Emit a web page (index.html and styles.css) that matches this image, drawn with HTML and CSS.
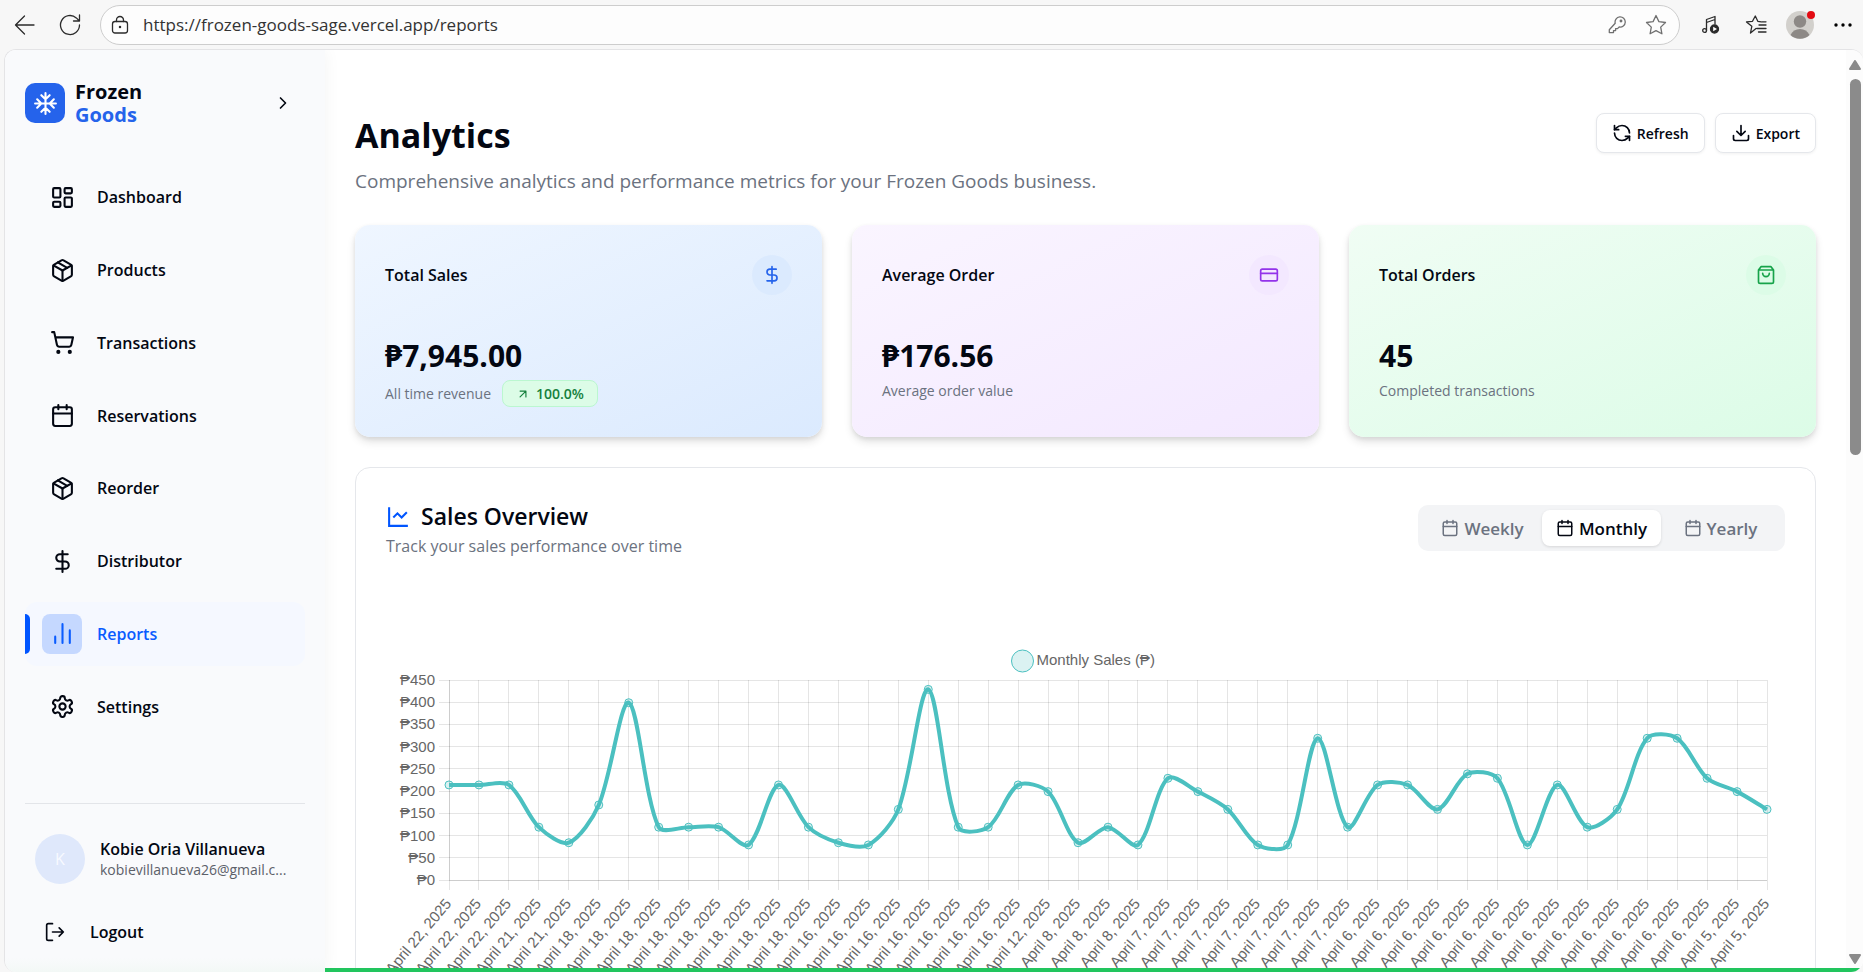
FILE: index.html
```html
<!DOCTYPE html>
<html lang="en">
<head>
<meta charset="utf-8">
<title>Analytics - Frozen Goods</title>
<link rel="stylesheet" href="styles.css">
</head>
<body>
<svg class="sprite" aria-hidden="true">
  <symbol id="box" viewBox="0 0 24 24"><path d="M11 21.73a2 2 0 0 0 2 0l7-4A2 2 0 0 0 21 16V8a2 2 0 0 0-1-1.73l-7-4a2 2 0 0 0-2 0l-7 4A2 2 0 0 0 3 8v8a2 2 0 0 0 1 1.73z"/><path d="M12 22V12"/><path d="M3.300 7l8.700 5 8.700-5"/><path d="m7.500 4.270 9 5.150"/></symbol>
  <symbol id="calendar" viewBox="0 0 24 24"><path d="M8 2v4M16 2v4"/><rect width="18" height="18" x="3" y="4" rx="2"/><path d="M3 10h18"/></symbol>
  <symbol id="dollar" viewBox="0 0 24 24"><path d="M12 2v20M17 5H9.500a3.500 3.500 0 0 0 0 7h5a3.500 3.500 0 0 1 0 7H6"/></symbol>
  <symbol id="star" viewBox="0 0 24 24"><path d="M12 2.500l2.900 6.100 6.600.9-4.800 4.600 1.200 6.700-5.900-3.200-5.900 3.200 1.200-6.700-4.800-4.600 6.600-.9z"/></symbol>
</svg>

<header class="toolbar">
  <button class="tool" aria-label="Back"><svg class="thin" width="22" height="22" viewBox="0 0 22 22"><path d="M20 11H1.500M10.500 2l-9 9 9 9"/></svg></button>
  <button class="tool" aria-label="Reload"><svg class="thin" width="22" height="22" viewBox="0 0 22 22"><path d="M20.500 11a9.500 9.500 0 1 1-3.200-7.100L20 6.500M20.500 1v6h-6"/></svg></button>
  <div class="address">
    <svg class="thin" width="18" height="20" viewBox="0 0 18 20"><rect x="1.500" y="6.500" width="15" height="11.500" rx="2.500"/><path d="M5.500 6.500V5a3.500 3.500 0 0 1 7 0v1.500"/><circle class="solid" cx="9" cy="12" r=".6"/></svg>
    <input class="url" type="text" aria-label="Address" value="https://frozen-goods-sage.vercel.app/reports">
    <svg class="thin grey" width="18" height="18" viewBox="0 0 18 18"><path d="M7.200 7.200a5.100 5.100 0 1 1 4 3.800L9.500 12.600H7.600v2H5.500v2H1.300v-2.900z"/><circle cx="13" cy="5" r=".8"/></svg>
    <svg class="thin grey" width="24" height="24"><use href="#star"/></svg>
  </div>
  <div class="tools">
    <button class="tool" aria-label="Media controls"><svg class="thin" width="20" height="20" viewBox="0 0 20 20"><path d="M5.500 15.500V4.500l8.500-3V9M5.500 7.500l8.500-3"/><circle cx="3.600" cy="15.500" r="1.900"/><circle class="solid" cx="13.500" cy="14" r="4"/><path class="play" d="M12.200 11.700v4.600l3.800-2.300z"/></svg></button>
    <button class="tool" aria-label="Favorites"><svg class="thin" width="22" height="22" viewBox="0 0 22 22"><path d="M11 14.500l-5.500 4.500 1.300-6.700L1.500 7.900l6-.6L10.300 2l2.500 5.300 3.400.5M14 11h7M12 14.500h9M13.500 18H21M17 7.800h4"/></svg></button>
    <button class="tool" aria-label="Profile"><svg width="34" height="34" viewBox="0 0 34 34"><circle cx="16" cy="17" r="14" fill="#d2d0cc"/><path d="M6.500 27a10.500 10.500 0 0 1 19 0 14 14 0 0 1-19 0z" fill="#8d8986"/><circle cx="16" cy="13.500" r="6.200" fill="#8d8986"/><circle cx="27" cy="7" r="4" fill="#e30b13"/></svg></button>
    <button class="tool more" aria-label="More"><svg width="18" height="4" viewBox="0 0 18 4"><circle cx="2" cy="2" r="1.700"/><circle cx="9" cy="2" r="1.700"/><circle cx="16" cy="2" r="1.700"/></svg></button>
  </div>
</header>

<div class="app">
  <aside class="sidebar">
    <div class="brand">
      <span class="logo"><svg class="icon" width="25" height="25" viewBox="0 0 24 24"><path d="M2 12h20M12 2v20M20 16l-4-4 4-4M4 8l4 4-4 4M16 4l-4 4-4-4M8 20l4-4 4 4"/></svg></span>
      <span class="brand-name">Frozen<br><span class="brand-blue">Goods</span></span>
      <button class="collapse" aria-label="Toggle sidebar"><svg class="icon" width="20" height="20" viewBox="0 0 24 24"><path d="m9 18 6-6-6-6"/></svg></button>
    </div>
    <nav class="nav">
      <a class="nav-item" href="#"><span class="nav-icon"><svg class="icon" width="25" height="25" viewBox="0 0 24 24"><rect width="7" height="9" x="3" y="3" rx="1"/><rect width="7" height="5" x="14" y="3" rx="1"/><rect width="7" height="9" x="14" y="12" rx="1"/><rect width="7" height="5" x="3" y="16" rx="1"/></svg></span>Dashboard</a>
      <a class="nav-item" href="#"><span class="nav-icon"><svg class="icon" width="25" height="25"><use href="#box"/></svg></span>Products</a>
      <a class="nav-item" href="#"><span class="nav-icon"><svg class="icon" width="25" height="25" viewBox="0 0 24 24"><circle cx="8" cy="21" r="1"/><circle cx="19" cy="21" r="1"/><path d="M2.050 2.050h2l2.660 12.420a2 2 0 0 0 2 1.580h9.780a2 2 0 0 0 1.950-1.570l1.650-7.430H5.120"/></svg></span>Transactions</a>
      <a class="nav-item" href="#"><span class="nav-icon"><svg class="icon" width="25" height="25"><use href="#calendar"/></svg></span>Reservations</a>
      <a class="nav-item" href="#"><span class="nav-icon"><svg class="icon" width="25" height="25"><use href="#box"/></svg></span>Reorder</a>
      <a class="nav-item" href="#"><span class="nav-icon"><svg class="icon" width="25" height="25"><use href="#dollar"/></svg></span>Distributor</a>
      <a class="nav-item active" href="#" aria-current="page"><span class="nav-icon"><svg class="icon" width="25" height="25" viewBox="0 0 24 24"><path d="M5 21v-6M12 21V3M19 21V9"/></svg></span>Reports</a>
      <a class="nav-item" href="#"><span class="nav-icon"><svg class="icon" width="25" height="25" viewBox="0 0 24 24"><path d="M12.220 2h-.44a2 2 0 0 0-2 2v.18a2 2 0 0 1-1 1.730l-.43.25a2 2 0 0 1-2 0l-.15-.08a2 2 0 0 0-2.730.73l-.22.38a2 2 0 0 0 .73 2.730l.15.1a2 2 0 0 1 1 1.720v.51a2 2 0 0 1-1 1.740l-.15.09a2 2 0 0 0-.73 2.730l.22.38a2 2 0 0 0 2.730.73l.15-.08a2 2 0 0 1 2 0l.43.25a2 2 0 0 1 1 1.730V20a2 2 0 0 0 2 2h.44a2 2 0 0 0 2-2v-.18a2 2 0 0 1 1-1.730l.43-.25a2 2 0 0 1 2 0l.15.08a2 2 0 0 0 2.730-.73l.22-.39a2 2 0 0 0-.73-2.730l-.15-.08a2 2 0 0 1-1-1.740v-.5a2 2 0 0 1 1-1.740l.15-.09a2 2 0 0 0 .73-2.730l-.22-.38a2 2 0 0 0-2.730-.73l-.15.08a2 2 0 0 1-2 0l-.43-.25a2 2 0 0 1-1-1.730V4a2 2 0 0 0-2-2z"/><circle cx="12" cy="12" r="3"/></svg></span>Settings</a>
    </nav>
    <div class="account">
      <div class="user">
        <span class="avatar">K</span>
        <div class="user-text"><div class="user-name">Kobie Oria Villanueva</div><div class="user-mail">kobievillanueva26@gmail.c...</div></div>
      </div>
      <button class="logout"><svg class="icon" width="20" height="20" viewBox="0 0 24 24"><path d="M9 22H4a2 2 0 0 1-2-2V4a2 2 0 0 1 2-2h5M17 17l5-5-5-5M22 12H9"/></svg>Logout</button>
    </div>
  </aside>

  <main class="main">
    <div class="page-head">
      <div>
        <h1 class="title">Analytics</h1>
        <p class="subtitle">Comprehensive analytics and performance metrics for your Frozen Goods business.</p>
      </div>
      <div class="actions">
        <button class="btn"><svg class="icon" width="20" height="20" viewBox="0 0 24 24"><path d="M21 12a9 9 0 0 0-9-9 9.750 9.750 0 0 0-6.740 2.740L3 8"/><path d="M3 3v5h5M3 12a9 9 0 0 0 9 9 9.750 9.750 0 0 0 6.740-2.740L21 16"/><path d="M16 16h5v5"/></svg>Refresh</button>
        <button class="btn"><svg class="icon" width="20" height="20" viewBox="0 0 24 24"><path d="M21 15v4a2 2 0 0 1-2 2H5a2 2 0 0 1-2-2v-4M7 10l5 5 5-5M12 15V3"/></svg>Export</button>
      </div>
    </div>

    <section class="stats">
      <article class="stat blue">
        <div class="stat-head"><h2 class="stat-title">Total Sales</h2><span class="stat-icon"><svg class="icon" width="20" height="20"><use href="#dollar"/></svg></span></div>
        <div class="stat-value">₱7,945.00</div>
        <div class="stat-note">All time revenue <span class="badge"><svg class="icon" width="14" height="14" viewBox="0 0 24 24"><path d="M7 7h10v10M7 17 17 7"/></svg>100.0%</span></div>
      </article>
      <article class="stat purple">
        <div class="stat-head"><h2 class="stat-title">Average Order</h2><span class="stat-icon"><svg class="icon" width="20" height="20" viewBox="0 0 24 24"><rect width="20" height="14" x="2" y="5" rx="2"/><path d="M2 10h20"/></svg></span></div>
        <div class="stat-value">₱176.56</div>
        <div class="stat-note">Average order value</div>
      </article>
      <article class="stat green">
        <div class="stat-head"><h2 class="stat-title">Total Orders</h2><span class="stat-icon"><svg class="icon" width="20" height="20" viewBox="0 0 24 24"><path d="M6 2 3 6v14a2 2 0 0 0 2 2h14a2 2 0 0 0 2-2V6l-3-4zM3 6h18M16 10a4 4 0 0 1-8 0"/></svg></span></div>
        <div class="stat-value">45</div>
        <div class="stat-note">Completed transactions</div>
      </article>
    </section>

    <section class="panel">
      <div class="panel-head">
        <div>
          <h2 class="panel-title"><svg class="icon" width="25" height="25" viewBox="0 0 24 24"><path class="square" d="M3 3v18h18M7 13l4-4 4 4 5-5"/></svg>Sales Overview</h2>
          <p class="panel-sub">Track your sales performance over time</p>
        </div>
        <div class="tabs" role="tablist">
          <button class="tab" role="tab"><svg class="icon" width="18" height="18"><use href="#calendar"/></svg>Weekly</button>
          <button class="tab selected" role="tab" aria-selected="true"><svg class="icon" width="18" height="18"><use href="#calendar"/></svg>Monthly</button>
          <button class="tab" role="tab"><svg class="icon" width="18" height="18"><use href="#calendar"/></svg>Yearly</button>
        </div>
      </div>
      <svg class="chart" id="chart" role="img" aria-label="Monthly Sales"></svg>
    </section>
  </main>

  <div class="scrollbar" aria-hidden="true">
    <svg width="12" height="10" viewBox="0 0 12 10"><path d="M6 1l5 8H1z"/></svg>
    <span class="thumb"></span>
    <svg width="12" height="10" viewBox="0 0 12 10"><path d="M6 9l5-8H1z"/></svg>
  </div>
  <div class="progress"></div>
</div>
<script src="chart.js"></script>
</body>
</html>
```
FILE: styles.css
```css
* { box-sizing: border-box; }
body {
  margin: 0;
  height: 100vh;
  overflow: hidden;
  display: flex;
  flex-direction: column;
  background: #f7f7f7;
  color: #030712;
  font-family: "Open Sans", "Noto Sans", sans-serif;
  font-size: 16px;
}
h1, h2, p { margin: 0; }
button, input { font: inherit; color: inherit; border: 0; background: none; padding: 0; }
a { color: inherit; text-decoration: none; }
svg { display: block; flex: none; }
.sprite { position: absolute; width: 0; height: 0; }
.icon { fill: none; stroke: currentColor; stroke-width: 2; stroke-linecap: round; stroke-linejoin: round; }

/* browser toolbar */
.toolbar { display: flex; align-items: center; height: 49px; flex: none; padding-left: 2px; color: #2b2b2b; }
.thin { fill: none; stroke: currentColor; stroke-width: 1.3; stroke-linejoin: round; stroke-linecap: round; }
.grey { color: #707070; }
.solid { fill: currentColor; }
.play { fill: #fff; stroke: none; }
.tool { width: 45px; height: 40px; display: flex; align-items: center; justify-content: center; }
.tool.more { width: 40px; }
.tools { display: flex; }
.address {
  flex: 1; min-width: 0; height: 40px; margin: 0 8px; padding: 0 11px 0 10px;
  display: flex; align-items: center; gap: 18px;
  background: #fdfdfd; border: 1px solid #cdcdcd; border-radius: 20px;
}
.url { flex: 1; min-width: 0; outline: 0; font-size: 17px; color: #333; margin-left: -4px; }

/* app frame */
.app {
  flex: 1; min-height: 0; margin-left: 4px; display: flex; position: relative; overflow: hidden;
  background: #fff; border: 1px solid #e4e4e6; border-right: 0; border-bottom: 0; border-radius: 12px;
}
.sidebar {
  width: 320px; flex: none; display: flex; flex-direction: column;
  padding: 32px 20px 28px; background: linear-gradient(#f9fafc calc(100% - 14px), #f3f8f6);
  box-shadow: 0 0 16px rgba(0, 0, 0, .05);
}
.brand { display: flex; align-items: center; height: 42px; gap: 10px; }
.logo { width: 40px; height: 40px; border-radius: 10px; background: #2563eb; color: #fff; display: flex; align-items: center; justify-content: center; }
.brand-name { font-size: 20px; line-height: 23px; font-weight: 700; }
.brand-blue { color: #2563eb; }
.collapse { margin-left: auto; margin-right: 12px; }
.nav { flex: 1; display: flex; flex-direction: column; gap: 8px; margin: 41px 0 64px; }
.nav-item { flex: 1; display: flex; align-items: center; gap: 15px; padding-left: 17px; border-radius: 12px; font-weight: 600; position: relative; }
.nav-icon { width: 40px; height: 40px; border-radius: 8px; display: flex; align-items: center; justify-content: center; }
.active { background: #f5f8ff; color: #0a5cff; }
.active .nav-icon { background: #c5d8ff; }
.active::before { content: ""; position: absolute; left: 0; width: 5px; height: 40px; background: #0055ff; border-radius: 0 5px 5px 0; }
.account { border-top: 1px solid #e3e5e9; padding: 30px 10px 0; }
.user { display: flex; align-items: center; gap: 15px; height: 50px; }
.avatar { width: 50px; height: 50px; flex: none; border-radius: 50%; background: #dfe8fb; color: #f8faff; display: flex; align-items: center; justify-content: center; font-weight: 500; }
.user-name { line-height: 22px; font-weight: 600; }
.user-mail { font-size: 14px; line-height: 20px; color: #5c6069; }
.user-text { white-space: nowrap; }
.logout { display: flex; align-items: center; gap: 25px; margin: 36px 0 0 10px; line-height: 24px; font-weight: 600; }

/* page */
.main { flex: 1; min-width: 0; padding: 60px 30px 0; overflow: hidden; }
.page-head { display: flex; justify-content: space-between; align-items: flex-start; }
.title { font-size: 34px; line-height: 50px; font-weight: 700; }
.subtitle { font-size: 19px; line-height: 30px; margin-top: 6px; color: #6b7280; }
.actions { display: flex; gap: 10px; margin-top: 3px; }
.btn { display: flex; align-items: center; gap: 5px; height: 40px; padding: 0 15px; border: 1px solid #e5e7eb; border-radius: 8px; background: #fff; font-size: 14px; font-weight: 600; box-shadow: 0 1px 3px rgba(0, 0, 0, .06); }
.stats { display: grid; grid-template-columns: repeat(3, 1fr); gap: 30px; margin-top: 29px; }
.stat { height: 212px; padding: 30px; border-radius: 15px; box-shadow: 0 5px 8px rgba(0, 0, 0, .11), 0 2px 4px rgba(0, 0, 0, .08); }
.stat-head { display: flex; justify-content: space-between; align-items: center; height: 40px; }
.stat-title { font-size: 16px; font-weight: 600; }
.stat-icon { width: 40px; height: 40px; border-radius: 50%; display: flex; align-items: center; justify-content: center; }
.stat-value { margin-top: 41px; font-size: 30px; line-height: 40px; font-weight: 700; }
.stat-note { display: flex; align-items: center; gap: 11px; margin-top: 4px; font-size: 14px; line-height: 22px; color: #6b7280; }
.badge { display: flex; align-items: center; gap: 6px; height: 27px; padding: 0 13px; border: 1px solid #bbf7d0; border-radius: 8px; background: #dcfce7; color: #15803d; font-weight: 600; }
.blue { background: linear-gradient(to bottom right, #eff6ff, #dbeafe); }
.blue .stat-icon { background: #dbeafe; color: #2563eb; }
.purple { background: linear-gradient(to bottom right, #faf5ff, #f3e8ff); }
.purple .stat-icon { background: #f3e8ff; color: #9333ea; }
.green { background: linear-gradient(to bottom right, #f0fdf4, #dcfce7); }
.green .stat-icon { background: #dcfce7; color: #16a34a; }

.panel { margin-top: 30px; padding: 30px; border: 1px solid #e5e7eb; border-radius: 15px; }
.panel-head { display: flex; justify-content: space-between; align-items: center; }
.panel-title { display: flex; align-items: center; gap: 10px; font-size: 23px; line-height: 36px; font-weight: 600; }
.panel-title .icon { color: #0055ff; }
.square { stroke-linecap: butt; stroke-linejoin: miter; }
.panel-sub { font-size: 16px; line-height: 24px; color: #6b7280; }
.tabs { display: grid; grid-template-columns: repeat(3, 119px); height: 46px; padding: 5px; border-radius: 10px; background: #f3f4f6; color: #6b7280; }
.tab { display: flex; align-items: center; justify-content: center; gap: 5px; border-radius: 8px; font-size: 17px; font-weight: 600; }
.tab.selected { background: #fff; color: #030712; box-shadow: 0 1px 3px rgba(0, 0, 0, .12); }
.chart { width: 100%; height: 440px; margin-top: 60px; font-family: "Liberation Sans", Arial, sans-serif; font-size: 15px; fill: #666; }
.grid { stroke: rgba(0, 0, 0, .1); fill: none; }
.line { stroke: #4bc0c0; stroke-width: 4; fill: none; }
.dot { fill: rgba(75, 192, 192, .2); stroke: #4bc0c0; stroke-width: 1; }

.scrollbar { width: 17px; flex: none; display: flex; flex-direction: column; align-items: center; padding: 10px 0 8px 1px; background: #fcfcfc; }
.scrollbar svg { fill: #8b8b8b; stroke: #8b8b8b; stroke-width: 2; stroke-linejoin: round; }
.thumb { width: 11px; height: 376px; margin: 9px 0 auto; border-radius: 6px; background: #8b8b8b; }
.progress { position: absolute; left: 320px; right: 0; bottom: 0; height: 4px; background: #22c55e; }
```
FILE: chart.js
```js
const sales = [215, 215, 215, 120, 85, 170, 400, 120, 120, 120, 80, 215, 120, 85, 80,
  160, 430, 120, 120, 215, 200, 85, 120, 80, 230, 200, 160, 80, 80, 320,
  120, 215, 215, 160, 240, 230, 80, 215, 120, 160, 320, 320, 230, 200, 160];
const days = [[22, 3], [21, 2], [18, 8], [16, 7], [12, 1], [8, 3], [7, 7], [6, 12], [5, 2]]
  .flatMap(([day, count]) => Array(count).fill(`April ${day}, 2025`));

const svg = document.getElementById('chart');

function add(name, attrs, text) {
  const el = document.createElementNS('http://www.w3.org/2000/svg', name);
  for (const key in attrs) el.setAttribute(key, attrs[key]);
  if (text) el.textContent = text;
  svg.appendChild(el);
}

function draw() {
  svg.textContent = '';
  const width = svg.clientWidth;
  const left = 63, right = width - 18, top = 62, bottom = 262, tension = 0.3;
  const x = i => left + (right - left) * i / (sales.length - 1);
  const y = v => bottom - (bottom - top) * v / 450;
  const crisp = n => Math.floor(n) + 0.5;

  add('circle', { class: 'dot', cx: width / 2 - 63, cy: 43, r: 11 });
  add('text', { x: width / 2 - 49, y: 47 }, 'Monthly Sales (₱)');

  for (let v = 0; v <= 450; v += 50) {
    add('path', { class: 'grid', d: `M${left - 10} ${crisp(y(v))}H${right}` });
    add('text', { x: left - 14, y: Math.round(y(v)) + 5, 'text-anchor': 'end' }, '₱' + v);
  }
  sales.forEach((v, i) => {
    add('path', { class: 'grid', d: `M${crisp(x(i))} ${top}V${bottom + 10}` });
    add('text', { 'text-anchor': 'end', transform: `translate(${x(i) + 3} ${bottom + 24}) rotate(-50)` }, days[i]);
  });
  add('path', { class: 'grid', d: `M${crisp(left)} ${top}V${bottom}M${left} ${bottom + 0.5}H${right}` });

  // Cubic spline: control points weighted by the distance to each neighbour.
  const points = sales.map((v, i) => [x(i), y(v) + 0.5]);
  const controls = points.map((p, i) => {
    const a = points[Math.max(i - 1, 0)];
    const b = points[Math.min(i + 1, points.length - 1)];
    const da = Math.hypot(p[0] - a[0], p[1] - a[1]);
    const db = Math.hypot(b[0] - p[0], b[1] - p[1]);
    const fa = tension * da / (da + db), fb = tension * db / (da + db);
    return [
      [p[0] - fa * (b[0] - a[0]), p[1] - fa * (b[1] - a[1])],
      [p[0] + fb * (b[0] - a[0]), p[1] + fb * (b[1] - a[1])]
    ];
  });
  let d = 'M' + points[0];
  for (let i = 1; i < points.length; i++) d += `C${controls[i - 1][1]} ${controls[i][0]} ${points[i]}`;
  add('path', { class: 'line', d });
  points.forEach(p => add('circle', { class: 'dot', cx: p[0], cy: p[1], r: 4 }));
}

draw();
addEventListener('resize', draw);
```
